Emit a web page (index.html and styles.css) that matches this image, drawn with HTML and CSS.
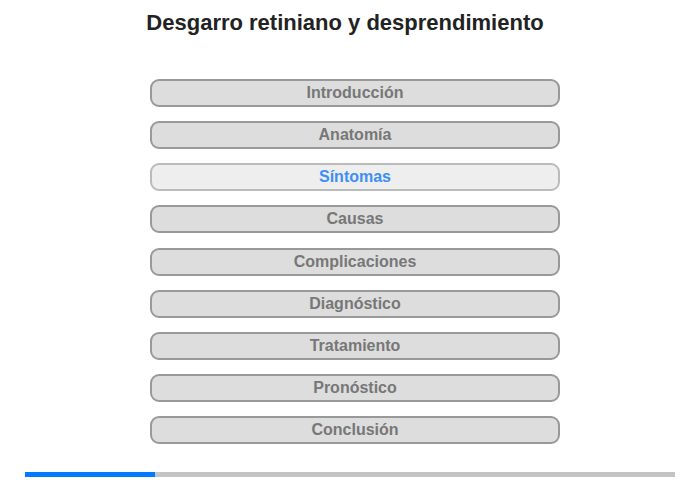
FILE: index.html
```html
<!DOCTYPE html>
<html lang="es">
<head>
    <meta charset="UTF-8">
    <meta name="viewport" content="width=device-width, initial-scale=1.0">
    <title>Desgarro retiniano y desprendimiento</title>
    <link rel="stylesheet" href="styles.css">
</head>
<body>
    <div class="page">
        <h1>Desgarro retiniano y desprendimiento</h1>
        <nav class="menu">
            <button type="button" class="item">Introducción</button>
            <button type="button" class="item">Anatomía</button>
            <button type="button" class="item active">Síntomas</button>
            <button type="button" class="item">Causas</button>
            <button type="button" class="item">Complicaciones</button>
            <button type="button" class="item">Diagnóstico</button>
            <button type="button" class="item">Tratamiento</button>
            <button type="button" class="item">Pronóstico</button>
            <button type="button" class="item">Conclusión</button>
        </nav>
        <div class="progress">
            <div class="progress-fill" style="width: 20%"></div>
        </div>
    </div>
</body>
</html>
```

FILE: styles.css
```css
* {
    margin: 0;
    padding: 0;
    box-sizing: border-box;
}
body {
    background-color: #fff;
    font-family: 'Liberation Sans', Arial, sans-serif;
    color: #222;
}
.page {
    display: flex;
    flex-direction: column;
    padding-top: 10px;
}
h1 {
    font-size: 22px;
    font-weight: bold;
    color: #222;
    text-align: center;
    width: 690px;
    line-height: 25px;
}
.menu {
    display: flex;
    flex-direction: column;
    gap: 14.125px;
    width: 410px;
    margin-top: 44px;
    margin-left: 150px;
}
.item {
    height: 28px;
    width: 100%;
    background-color: #dddddd;
    border: 2px solid #999;
    border-radius: 9px;
    font-family: 'Liberation Sans', Arial, sans-serif;
    font-size: 16px;
    font-weight: bold;
    color: #777;
    cursor: pointer;
    outline: none;
}
.item.active {
    background-color: #eeeeee;
    border-color: #bbb;
    color: #3d8ef7;
}
.progress {
    width: 650px;
    height: 5px;
    margin-top: 28px;
    margin-left: 25px;
    background-color: #c4c4c4;
}
.progress-fill {
    height: 100%;
    background-color: #007bff;
}
```
